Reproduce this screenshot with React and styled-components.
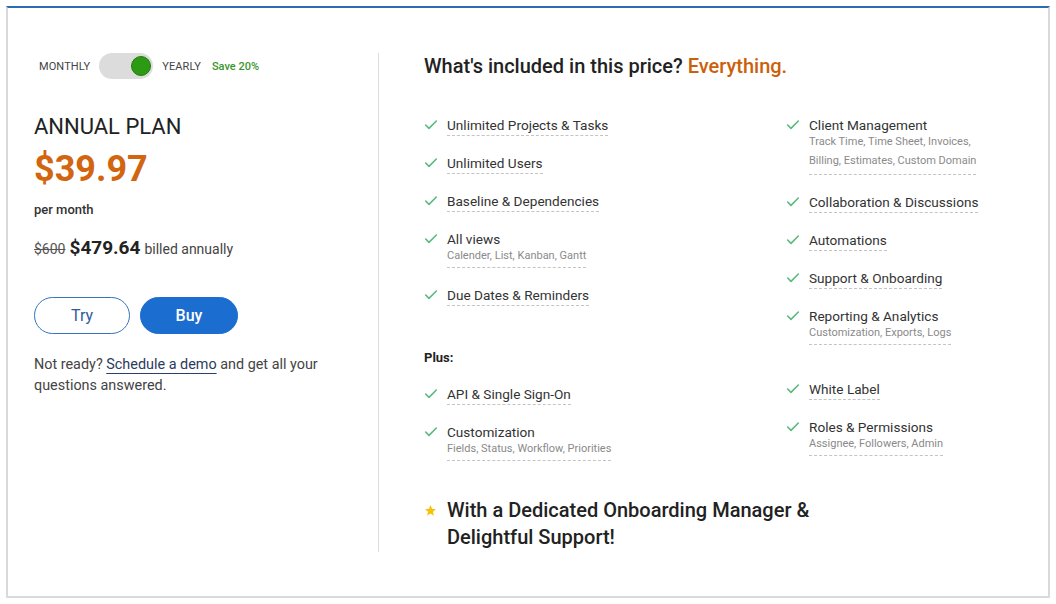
import styled, { createGlobalStyle } from 'styled-components'
import { Check } from 'lucide-react'

const GlobalStyle = createGlobalStyle`
    body {
        margin: 0;
        background: #fff;
        font-family: Roboto, "Liberation Sans", sans-serif;
        color: #333;
    }
`

const Page = styled.div`
    padding: 6px;
`

const Card = styled.div`
    height: 592px;
    box-sizing: border-box;
    border: 2px solid #dadada;
    border-top: 2px solid #2d6cb5;
    padding: 45px 0 44px 0;
    display: flex;
`

const LeftCol = styled.div`
    width: 371px;
    flex-shrink: 0;
    box-sizing: border-box;
    padding: 0 20px 0 26px;
    border-right: 1px solid #dcdcdc;
`

const RightCol = styled.div`
    flex: 1;
    padding-left: 45px;
`

const ToggleRow = styled.div`
    display: flex;
    align-items: center;
    height: 26px;
    padding-left: 5px;
    gap: 9px;
`

const ToggleLabel = styled.span`
    font-size: 11px;
    color: #444;
    text-transform: uppercase;
    letter-spacing: 0.1px;
`

const Track = styled.div`
    width: 54px;
    height: 26px;
    border-radius: 13px;
    background: #dcdcdc;
    display: flex;
    align-items: center;
    justify-content: flex-end;
    padding: 0 2px;
    box-sizing: border-box;
`

const Knob = styled.div`
    width: 20px;
    height: 20px;
    border-radius: 50%;
    background: #2c9a12;
    border: 1px solid #227d0c;
    box-sizing: border-box;
`

const Save = styled.span`
    font-size: 11px;
    font-weight: 500;
    color: #3a962c;
    margin-left: 2px;
`

const PlanName = styled.h2`
    margin: 35px 0 0 0;
    font-size: 22px;
    line-height: 26px;
    font-weight: 400;
    color: #222;
`

const BigPrice = styled.div`
    margin-top: 8px;
    font-size: 36px;
    line-height: 42px;
    font-weight: 700;
    color: #d2650f;
`

const PerMonth = styled.div`
    margin-top: 11px;
    font-size: 13px;
    line-height: 18px;
    font-weight: 500;
    color: #333;
`

const PriceLine = styled.div`
    margin-top: 17px;
    line-height: 24px;
    font-size: 14px;
    color: #444;
`

const OldPrice = styled.s`
    color: #555;
    margin-right: 4px;
`

const Annual = styled.b`
    font-size: 19px;
    font-weight: 700;
    color: #222;
    margin-right: 4px;
`

const Buttons = styled.div`
    display: flex;
    gap: 10px;
    margin-top: 36px;
`

const PillButton = styled.button`
    width: ${p => p.$filled ? '98px' : '96px'};
    height: 37px;
    border-radius: 19px;
    font-family: inherit;
    font-size: 16px;
    font-weight: ${p => p.$filled ? 500 : 400};
    border: 1.5px solid ${p => p.$filled ? '#1b6dd0' : '#3574bd'};
    background: ${p => p.$filled ? '#1b6dd0' : '#fff'};
    color: ${p => p.$filled ? '#fff' : '#2d5c99'};
    cursor: pointer;
`

const Note = styled.p`
    margin: 20px 0 0 0;
    font-size: 14.4px;
    line-height: 21px;
    color: #444;
`

const DemoLink = styled.a`
    color: #2b3b5c;
    text-decoration: underline;
    text-decoration-color: #2b3f6b;
    text-underline-offset: 4px;
`

const Heading = styled.h2`
    margin: 0;
    font-size: 20px;
    line-height: 26px;
    font-weight: 500;
    color: #222;
`

const Accent = styled.span`
    color: #cc5f0c;
`

const Features = styled.div`
    display: grid;
    grid-template-columns: 362px 1fr;
    margin-top: 37px;
`

const Column = styled.div`
    display: flex;
    flex-direction: column;
`

const Group = styled.div`
    display: flex;
    flex-direction: column;
    gap: 18px;
    margin-top: ${p => p.$offset || 0}px;
`

const PlusLabel = styled.div`
    font-size: 13px;
    line-height: 18px;
    font-weight: 700;
    color: #222;
`

const Item = styled.div`
    display: flex;
    align-items: flex-start;
`

const CheckIcon = styled(Check)`
    flex-shrink: 0;
    margin: 1px 8px 0 -1px;
    color: #5cb97f;
`

const ItemBody = styled.div`
    border-bottom: 1px dashed #c4c4c4;
    padding-bottom: ${p => p.$pad}px;
`

const ItemTitle = styled.div`
    font-size: 13.6px;
    line-height: 18px;
    color: #333;
`

const ItemSub = styled.div`
    font-size: 11px;
    line-height: 18px;
    color: #8a8a8a;
    margin-top: -1px;

    & + & {
        margin-top: 1px;
    }
`

const Highlight = styled.div`
    display: flex;
    align-items: flex-start;
    margin-top: 36px;
`

const StarIcon = styled.svg`
    flex-shrink: 0;
    margin: 7px 10px 0 0;
`

const HighlightText = styled.div`
    font-size: 20px;
    line-height: 27px;
    font-weight: 500;
    color: #222;
    width: 380px;
`

const Feature = ({ title, sub }) => {
    const lines = sub || []
    const pad = lines.length > 1 ? 4 : lines.length ? 2 : 1
    return (
        <Item>
            <CheckIcon size={16} strokeWidth={2.4} />
            <ItemBody $pad={pad}>
                <ItemTitle>{title}</ItemTitle>
                {lines.map((line) => <ItemSub key={line}>{line}</ItemSub>)}
            </ItemBody>
        </Item>
    )
}

const leftMain = [
    { title: 'Unlimited Projects & Tasks' },
    { title: 'Unlimited Users' },
    { title: 'Baseline & Dependencies' },
    { title: 'All views', sub: ['Calender, List, Kanban, Gantt'] },
    { title: 'Due Dates & Reminders' },
]

const rightMain = [
    { title: 'Client Management', sub: ['Track Time, Time Sheet, Invoices,', 'Billing, Estimates, Custom Domain'] },
    { title: 'Collaboration & Discussions' },
    { title: 'Automations' },
    { title: 'Support & Onboarding' },
    { title: 'Reporting & Analytics', sub: ['Customization, Exports, Logs'] },
]

const leftPlus = [
    { title: 'API & Single Sign-On' },
    { title: 'Customization', sub: ['Fields, Status, Workflow, Priorities'] },
]

const rightPlus = [
    { title: 'White Label' },
    { title: 'Roles & Permissions', sub: ['Assignee, Followers, Admin'] },
]

const App = () => {
    return (
        <Page>
            <GlobalStyle />
            <Card>
                <LeftCol>
                    <ToggleRow>
                        <ToggleLabel>Monthly</ToggleLabel>
                        <Track><Knob /></Track>
                        <ToggleLabel>Yearly</ToggleLabel>
                        <Save>Save 20%</Save>
                    </ToggleRow>
                    <PlanName>ANNUAL PLAN</PlanName>
                    <BigPrice>$39.97</BigPrice>
                    <PerMonth>per month</PerMonth>
                    <PriceLine>
                        <OldPrice>$600</OldPrice>
                        <Annual>$479.64</Annual>
                        billed annually
                    </PriceLine>
                    <Buttons>
                        <PillButton>Try</PillButton>
                        <PillButton $filled>Buy</PillButton>
                    </Buttons>
                    <Note>
                        Not ready? <DemoLink>Schedule a demo</DemoLink> and get all your questions answered.
                    </Note>
                </LeftCol>
                <RightCol>
                    <Heading>
                        What's included in this price? <Accent>Everything.</Accent>
                    </Heading>
                    <Features>
                        <Column>
                            <Group>
                                {leftMain.map((f) => <Feature key={f.title} {...f} />)}
                            </Group>
                            <Group $offset={43}>
                                <PlusLabel>Plus:</PlusLabel>
                                {leftPlus.map((f) => <Feature key={f.title} {...f} />)}
                            </Group>
                        </Column>
                        <Column>
                            <Group>
                                {rightMain.map((f) => <Feature key={f.title} {...f} />)}
                            </Group>
                            <Group $offset={35}>
                                {rightPlus.map((f) => <Feature key={f.title} {...f} />)}
                            </Group>
                        </Column>
                    </Features>
                    <Highlight>
                        <StarIcon width="13" height="13" viewBox="0 0 24 24">
                            <path d="M12 2l2.9 6.9 7.1.6-5.4 4.7 1.7 7.3L12 17.6 5.7 21.5l1.7-7.3L2 9.5l7.1-.6z" fill="#f4c20d" />
                        </StarIcon>
                        <HighlightText>
                            With a Dedicated Onboarding Manager &amp; Delightful Support!
                        </HighlightText>
                    </Highlight>
                </RightCol>
            </Card>
        </Page>
    )
}

export default App
